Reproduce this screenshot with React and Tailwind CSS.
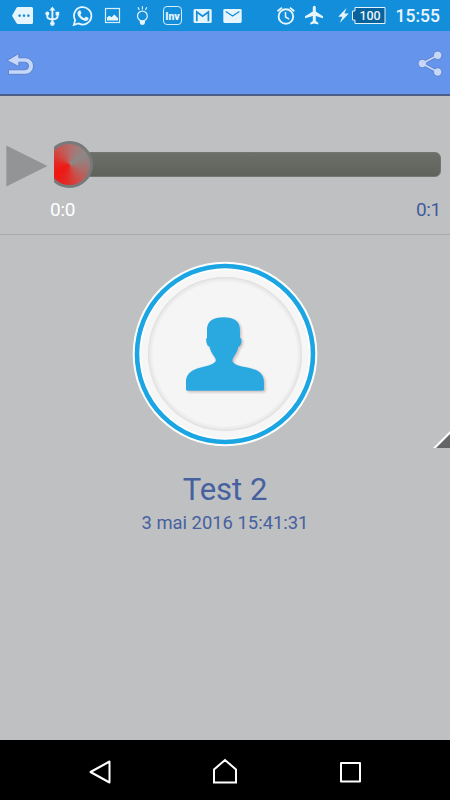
import React from 'react';

const StatusIcon = ({ children }) => (
    <svg viewBox="0 0 30 31" className="w-[30px] h-[31px] shrink-0" fill="#e6f4fc">
        {children}
    </svg>
);

const NotificationIcons = () => (
    <div className="flex pl-2">
        <StatusIcon>
            <path fillRule="evenodd" d="M10 7h13.5q1.500 0 1.500 1.500v14q0 1.500-1.500 1.500H10q-1 0-1.600-1L4 15.700L8.400 8Q9 7 10 7ZM11.600 14.300a1.300 1.300 0 1 0 .01 0ZM16 14.300a1.300 1.300 0 1 0 .01 0ZM20.400 14.300a1.300 1.300 0 1 0 .01 0Z" />
        </StatusIcon>
        <StatusIcon>
            <path d="M14.400 6.500l3 4h-6z" />
            <path d="M14.400 9v14M9.300 14v2.800q0 2.200 5.100 2.700M19.500 14v2.800q0 2.200-5.100 2.700" fill="none" stroke="#e6f4fc" strokeWidth="1.900" />
            <circle cx="9.300" cy="13.600" r="2" />
            <rect x="17.600" y="11.800" width="3.600" height="3.600" />
            <circle cx="14.400" cy="23.600" r="2.300" />
        </StatusIcon>
        <StatusIcon>
            <path d="M5.800 24.900l1.400-4.700a8.700 8.700 0 1 1 3.300 3.200z" fill="none" stroke="#e6f4fc" strokeWidth="1.800" />
            <path d="M11.300 10.500q.9-.5 1.300.4l.8 1.900q.2.500-.3 1l-.8 1q1.400 2.500 3.900 3.500l1.200-1.400q.4-.4.900-.1l1.900 1q.6.300.3 1.100q-.8 2.200-3.300 2q-3.900-.6-6.700-4.600q-2.500-3.800.8-5.800z" />
        </StatusIcon>
        <StatusIcon>
            <rect x="7.500" y="8.500" width="14" height="14" fill="none" stroke="#d8effb" strokeWidth="1.200" />
            <path d="M9 20.500v-3l2.200-1.700l2.300 1.500l2.800-2.700l3.700 3.600v2.300z" />
        </StatusIcon>
        <StatusIcon>
            <circle cx="14.400" cy="16" r="4.900" fill="none" stroke="#e6f4fc" strokeWidth="1.200" />
            <path d="M11.800 20.500h5.200v2.300q-.4 2.200-2.600 2.200t-2.600-2.200z" />
            <path d="M14.400 6.200v3.200M10 7.200l1.400 2.800M18.800 7.200l-1.400 2.800" stroke="#e6f4fc" strokeWidth="1.100" />
        </StatusIcon>
        <StatusIcon>
            <rect x="5.500" y="6.500" width="18" height="18" rx="3.500" fill="none" stroke="#d3edfb" strokeWidth="1" />
            <text x="14.500" y="19.500" textAnchor="middle" textLength="14.500" lengthAdjust="spacingAndGlyphs" className="font-['Roboto',sans-serif] text-[11px] font-black">Inv</text>
        </StatusIcon>
        <StatusIcon>
            <rect x="5.500" y="9" width="18.200" height="14" rx="1.600" />
            <path d="M8.800 21.300V12l5.800 4.300l5.800-4.300v9.300" fill="none" stroke="#138edb" strokeWidth="1.700" />
        </StatusIcon>
        <StatusIcon>
            <rect x="5.300" y="9" width="18.400" height="14" rx="1.400" />
            <path d="M7.800 11.500l6.800 4.500l6.800-4.500" fill="none" stroke="#138edb" strokeWidth="1.300" />
        </StatusIcon>
    </div>
);

const SystemIcons = () => (
    <div className="flex">
        <StatusIcon>
            <circle cx="15.900" cy="16.500" r="7.300" fill="none" stroke="#e6f4fc" strokeWidth="1.900" />
            <path d="M7.500 11.300l4.400-3.700M24.300 11.300l-4.400-3.700" stroke="#e6f4fc" strokeWidth="1.800" />
            <path d="M15.500 12v5l3.700 2.200" fill="none" stroke="#e6f4fc" strokeWidth="1.500" />
        </StatusIcon>
        <StatusIcon>
            <path d="M23 18.300v-2.100l-7.200-4.600V7.300a1.500 1.500 0 0 0-3 0v4.300L5 16.200v2.100l7.800-2.300v5l-2.500 1.800v1.800l4-1l4 1v-1.800l-2.500-1.800v-5z" />
        </StatusIcon>
        <svg viewBox="0 0 58 31" className="w-[58px] h-[31px] shrink-0" fill="#e6f4fc">
            <path d="M16.500 8L8.200 16.700h4.200L9.800 23l9-9.400h-4.400z" />
            <path d="M25 7.500h30v16H25v-3.500h-2.500v-9H25z" fill="#08629c" stroke="#e6f4fc" strokeWidth="1" />
            <text x="40" y="20" textAnchor="middle" textLength="21" className="font-['Roboto',sans-serif] text-[12.500px] font-medium">100</text>
        </svg>
    </div>
);

const StatusBar = () => (
    <div className="flex h-[31px] items-center justify-between bg-[#138edb] pr-[10px]">
        <NotificationIcons />
        <div className="flex items-center">
            <SystemIcons />
            <span className="ml-[7px] mt-[2px] w-[45px] whitespace-nowrap text-right text-[17.500px] leading-none font-medium text-[#eaf6fd]">15:55</span>
        </div>
    </div>
);

const ActionBar = () => (
    <div className="flex h-[65px] items-center justify-between border-b-2 border-[#4b5e88] bg-[#6594ec] px-[4px] pt-[3px]">
        <svg viewBox="4 50 34 28" className="h-[28px] w-[34px]">
            <path d="M7.200 60.500L18.800 53.500v4.300h6.500a8.200 8.200 0 0 1 0 16.500H8.500v-4.500h16.300a3.800 3.800 0 0 0 0-7.600h-6v4.300z" fill="#c5d7fa" stroke="#5577be" strokeWidth=".8" />
        </svg>
        <svg viewBox="416 49 30 30" className="h-[30px] w-[30px]" fill="#c5d7fa" stroke="#5577be" strokeWidth=".8">
            <path d="M437.700 55.300L422.300 63.500L437.700 72" fill="none" stroke="#5577be" strokeWidth="3" />
            <circle cx="437.700" cy="55.300" r="4.200" />
            <circle cx="422.300" cy="63.500" r="4.200" />
            <circle cx="437.700" cy="72" r="4.200" />
            <path d="M437.700 55.300L422.300 63.500L437.700 72" fill="none" stroke="#c5d7fa" strokeWidth="1.800" />
        </svg>
    </div>
);

const Player = () => (
    <div className="h-[139px] border-b border-[#a9abad] pt-[43px]">
        <div className="flex h-[51px] items-center pr-[9px] pl-[6px]">
            <svg viewBox="0 0 42 42" className="mt-[2px] h-[42px] w-[42px] shrink-0">
                <path d="M.3.500L41.500 21L.3 41.500z" fill="#939496" />
            </svg>
            <div className="relative ml-[6px] flex h-[51px] flex-1 items-center overflow-hidden">
                <div className="h-[25px] w-full rounded-[6px] border border-[#747670] bg-linear-to-b from-[#6d706a] to-[#5f625b]" />
                {/* thumb, cut off at the start of the track */}
                <div className="absolute top-[2px] -left-[8px] size-[47px] rounded-full bg-[#77797b] p-[3px]">
                    <div className="size-[41px] rounded-full bg-[conic-gradient(from_55deg,#8c8988,#a5716e_50deg,#cf4b46_100deg,#e62520_140deg,#ef1712_180deg,#e62520_220deg,#cf4b46_260deg,#b0706d_310deg,#8c8988)]" />
                </div>
            </div>
        </div>
        <div className="flex justify-between pt-[8px] pr-[9px] pl-[50px] text-[19px] leading-[24px] tracking-[-0.3px]">
            <span className="text-white">0:0</span>
            <span className="text-[#405c9d]">0:1</span>
        </div>
    </div>
);

const Avatar = () => (
    <svg viewBox="0 0 200 200" className="h-[200px] w-[200px] shrink-0">
        <defs>
            <filter id="soft" x="-20%" y="-20%" width="140%" height="140%">
                <feDropShadow dx="1.500" dy="1.500" stdDeviation="1.200" floodColor="#8b6f66" floodOpacity=".4" />
            </filter>
            <radialGradient id="dish">
                <stop offset=".93" stopColor="#f5f5f5" />
                <stop offset=".98" stopColor="#e8e8e8" />
                <stop offset="1" stopColor="#dcdcdc" />
            </radialGradient>
        </defs>
        <circle cx="100" cy="99" r="92.300" fill="#fff" />
        <circle cx="100" cy="99" r="90.300" fill="#1ba5e2" />
        <circle cx="100" cy="99" r="85.700" fill="#fff" />
        <circle cx="100" cy="99" r="84" fill="#f6f6f6" />
        <circle cx="100" cy="99" r="77" fill="url(#dish)" />
        <path
            filter="url(#soft)"
            fill="#29a9e1"
            d="M82 83V75C82 66 88 62.300 98.500 62.300S115 66 115 75v8c1.500.1 1.800 1.800 1.400 4.200c-.4 2.800-1.500 4.300-3 4.600c-.3 3.500-2.400 6.700-4.200 9.500c-1.300 1.900-1.800 3.500-1.700 4.700c.8 2.400 4.500 4.600 9.500 5.500c12 1.800 22 4.800 22 15.500v7c0 1-.5 1.700-1.500 1.700H62.500c-1 0-1.500-.7-1.500-1.700v-7c0-10.700 10-13.700 20.500-16c5-1.200 8.500-3 9.300-5.200c.1-1.300-.5-2.700-1.800-4.500c-2-2.800-4-6-4.400-9.500c-1.600-.4-2.800-2-3.200-4.800c-.4-2.300-.5-3.900.6-4z"
        />
    </svg>
);

const NavBar = () => (
    <div className="flex h-[60px] justify-around bg-black px-[37px]">
        <svg viewBox="0 0 40 60" className="h-[60px] w-[40px]" fill="none" stroke="#fff" strokeWidth="2" strokeLinejoin="round">
            <path d="M29.500 21.500v21L10.500 32z" />
        </svg>
        <svg viewBox="0 0 40 60" className="h-[60px] w-[40px]" fill="none" stroke="#fff" strokeWidth="2">
            <path d="M9 42.500V29.500l11-9.500l11 9.500v13z" />
        </svg>
        <svg viewBox="0 0 40 60" className="h-[60px] w-[40px]" fill="none" stroke="#fff" strokeWidth="2" strokeLinejoin="round">
            <path d="M11 23h19v18.500H11z" />
        </svg>
    </div>
);

export default function App() {
    return (
        <div className="relative flex h-[800px] w-[450px] flex-col overflow-hidden bg-[#bfc0c2] font-['Roboto',sans-serif]">
            <StatusBar />
            <ActionBar />
            <Player />
            <div className="flex flex-1 flex-col items-center pt-[20px]">
                <Avatar />
                <h1 className="mt-[15px] text-[31px] leading-[40px] text-[#45619f]">Test 2</h1>
                <p className="mt-[1px] text-[18.400px] leading-[24px] text-[#45619f]">3 mai 2016 15:41:31</p>
            </div>
            <NavBar />
            {/* drawer handle at the screen edge */}
            <svg viewBox="0 0 17 17" className="absolute top-[431px] right-0 h-[17px] w-[17px]">
                <path d="M0 17L17 0v17z" fill="#fff" />
                <path d="M3 17L17 3v14z" fill="#646567" />
            </svg>
        </div>
    );
}
